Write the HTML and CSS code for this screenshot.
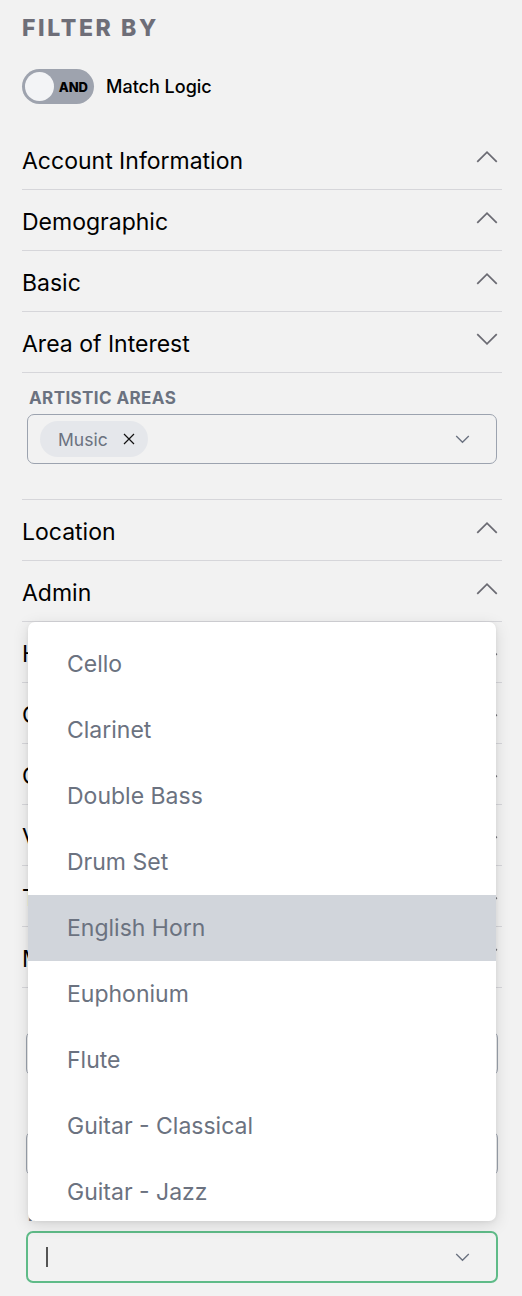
FILE: index.html
```html
<!DOCTYPE html>
<html lang="en">
<head>
    <meta charset="UTF-8">
    <title>Filter By</title>
    <link rel="stylesheet" href="styles.css">
</head>
<body>
<aside class="filter-panel">
    <h2 class="filter-title">FILTER BY</h2>

    <div class="match-logic">
        <div class="toggle">
            <span class="toggle-knob"></span>
            <span class="toggle-text">AND</span>
        </div>
        <span class="match-label">Match Logic</span>
    </div>

    <div class="section">
        <span class="section-name">Account Information</span>
        <svg class="chevron" viewBox="0 0 20 12"><path d="M1 11 L10 2 L19 11"/></svg>
    </div>
    <div class="section">
        <span class="section-name">Demographic</span>
        <svg class="chevron" viewBox="0 0 20 12"><path d="M1 11 L10 2 L19 11"/></svg>
    </div>
    <div class="section">
        <span class="section-name">Basic</span>
        <svg class="chevron" viewBox="0 0 20 12"><path d="M1 11 L10 2 L19 11"/></svg>
    </div>
    <div class="section section--open">
        <span class="section-name">Area of Interest</span>
        <svg class="chevron" viewBox="0 0 20 12"><path d="M1 1 L10 10 L19 1"/></svg>
    </div>
    <div class="section-body">
        <label class="field-label">ARTISTIC AREAS</label>
        <div class="select">
            <span class="chip">Music
                <svg class="chip-close" viewBox="0 0 12 12"><path d="M1 1 L11 11 M11 1 L1 11"/></svg>
            </span>
            <svg class="select-arrow" viewBox="0 0 16 10"><path d="M1 1 L8 8 L15 1"/></svg>
        </div>
    </div>
    <div class="section">
        <span class="section-name">Location</span>
        <svg class="chevron" viewBox="0 0 20 12"><path d="M1 11 L10 2 L19 11"/></svg>
    </div>
    <div class="section">
        <span class="section-name">Admin</span>
        <svg class="chevron" viewBox="0 0 20 12"><path d="M1 11 L10 2 L19 11"/></svg>
    </div>
    <div class="section">
        <span class="section-name">Household</span>
        <svg class="chevron" viewBox="0 0 20 12"><path d="M1 11 L10 2 L19 11"/></svg>
    </div>
    <div class="section">
        <span class="section-name">Contact</span>
        <svg class="chevron" viewBox="0 0 20 12"><path d="M1 11 L10 2 L19 11"/></svg>
    </div>
    <div class="section">
        <span class="section-name">Career</span>
        <svg class="chevron" viewBox="0 0 20 12"><path d="M1 11 L10 2 L19 11"/></svg>
    </div>
    <div class="section">
        <span class="section-name">Volunteer</span>
        <svg class="chevron" viewBox="0 0 20 12"><path d="M1 11 L10 2 L19 11"/></svg>
    </div>
    <div class="section">
        <span class="section-name">Tags</span>
        <svg class="chevron" viewBox="0 0 20 12"><path d="M1 11 L10 2 L19 11"/></svg>
    </div>
    <div class="section">
        <span class="section-name">Music</span>
        <svg class="chevron" viewBox="0 0 20 12"><path d="M1 1 L10 10 L19 1"/></svg>
    </div>

    <div class="fields">
        <div class="field">
            <label class="field-label">GENRES</label>
            <div class="select select--small"></div>
        </div>
        <div class="field">
            <label class="field-label">SKILL LEVEL</label>
            <div class="select select--small"></div>
        </div>
        <div class="field">
            <label class="field-label">INSTRUMENTS PLAYED</label>
            <div class="select select--focus">
                <span class="caret"></span>
                <svg class="select-arrow" viewBox="0 0 16 10"><path d="M1 1 L8 8 L15 1"/></svg>
            </div>
        </div>
    </div>

    <ul class="dropdown">
        <li class="dropdown-item">Cello</li>
        <li class="dropdown-item">Clarinet</li>
        <li class="dropdown-item">Double Bass</li>
        <li class="dropdown-item">Drum Set</li>
        <li class="dropdown-item dropdown-item--active">English Horn</li>
        <li class="dropdown-item">Euphonium</li>
        <li class="dropdown-item">Flute</li>
        <li class="dropdown-item">Guitar - Classical</li>
        <li class="dropdown-item">Guitar - Jazz</li>
        <li class="dropdown-item">Harp</li>
    </ul>
</aside>
</body>
</html>
```

FILE: styles.css
```css
*, ::before, ::after {
    box-sizing: border-box;
}

* {
    margin: 0;
    padding: 0;
}

body {
    background: #f2f2f2;
    font-family: Inter, "Noto Sans", sans-serif;
    color: #000;
}

.filter-panel {
    position: relative;
    width: 502px;
    padding: 15px 0 0 22px;
}

.filter-title {
    font-size: 23px;
    font-weight: 800;
    letter-spacing: 2.6px;
    color: #6e6e78;
    line-height: 26px;
}

.match-logic {
    display: flex;
    align-items: center;
    gap: 12px;
    margin-top: 28px;
    margin-bottom: 25px;
}

.toggle {
    display: flex;
    align-items: center;
    width: 72px;
    height: 35px;
    padding: 0 6px 0 3px;
    border-radius: 18px;
    background: #9ea3ae;
}

.toggle-knob {
    width: 29px;
    height: 29px;
    border-radius: 50%;
    background: #f3f4f6;
}

.toggle-text {
    margin-left: auto;
    font-size: 13px;
    font-weight: 800;
    color: #000;
}

.match-label {
    font-size: 18px;
    font-weight: 500;
}

.section {
    display: flex;
    align-items: center;
    justify-content: space-between;
    height: 61px;
    border-bottom: 1px solid #d6d6da;
    padding-top: 4px;
}

.section-name {
    font-size: 23px;
    font-weight: 400;
}

.chevron {
    width: 22px;
    height: 13px;
    margin-right: 4px;
    margin-bottom: 10px;
    fill: none;
    stroke: #6b6b73;
    stroke-width: 1.6;
}

.section-body {
    padding: 15px 5px 35px 5px;
    border-bottom: 1px solid #d6d6da;
}

.field-label {
    display: block;
    font-size: 17px;
    font-weight: 700;
    color: #6b7280;
    letter-spacing: 0.4px;
    line-height: 20px;
    margin: 0 0 6px 2px;
}

.select {
    display: flex;
    align-items: center;
    height: 50px;
    padding: 0 26px 0 12px;
    border: 1px solid #9ca3af;
    border-radius: 7px;
}

.chip {
    display: flex;
    align-items: center;
    gap: 15px;
    height: 36px;
    padding: 0 13px 0 18px;
    border-radius: 18px;
    background: #e5e7eb;
    font-size: 17.5px;
    color: #6b7280;
}

.chip-close {
    width: 12px;
    height: 12px;
    fill: none;
    stroke: #111;
    stroke-width: 1.2;
}

.select-arrow {
    width: 15px;
    height: 9px;
    margin-left: auto;
    fill: none;
    stroke: #6b7280;
    stroke-width: 1.5;
}

.fields {
    padding: 0 4px 0 4px;
}

.field {
    margin-top: 29px;
}

.field:first-child {
    margin-top: 17px;
}

.select--small {
    height: 45px;
}

.select--focus {
    height: 52px;
    border: 2px solid #5fbb88;
    padding-left: 18px;
}

.caret {
    width: 2px;
    height: 20px;
    background: #555;
}

.dropdown {
    position: absolute;
    top: 622px;
    left: 28px;
    width: 468px;
    height: 599px;
    padding-top: 9px;
    overflow: hidden;
    list-style: none;
    background: #fff;
    border-radius: 7px;
    box-shadow: 0 4px 16px rgba(0, 0, 0, 0.13), 0 1px 4px rgba(0, 0, 0, 0.06);
}

.dropdown-item {
    display: flex;
    align-items: center;
    height: 66px;
    padding-left: 39px;
    font-size: 23px;
    color: #6b7280;
}

.dropdown-item--active {
    background: #d1d5db;
}
```
